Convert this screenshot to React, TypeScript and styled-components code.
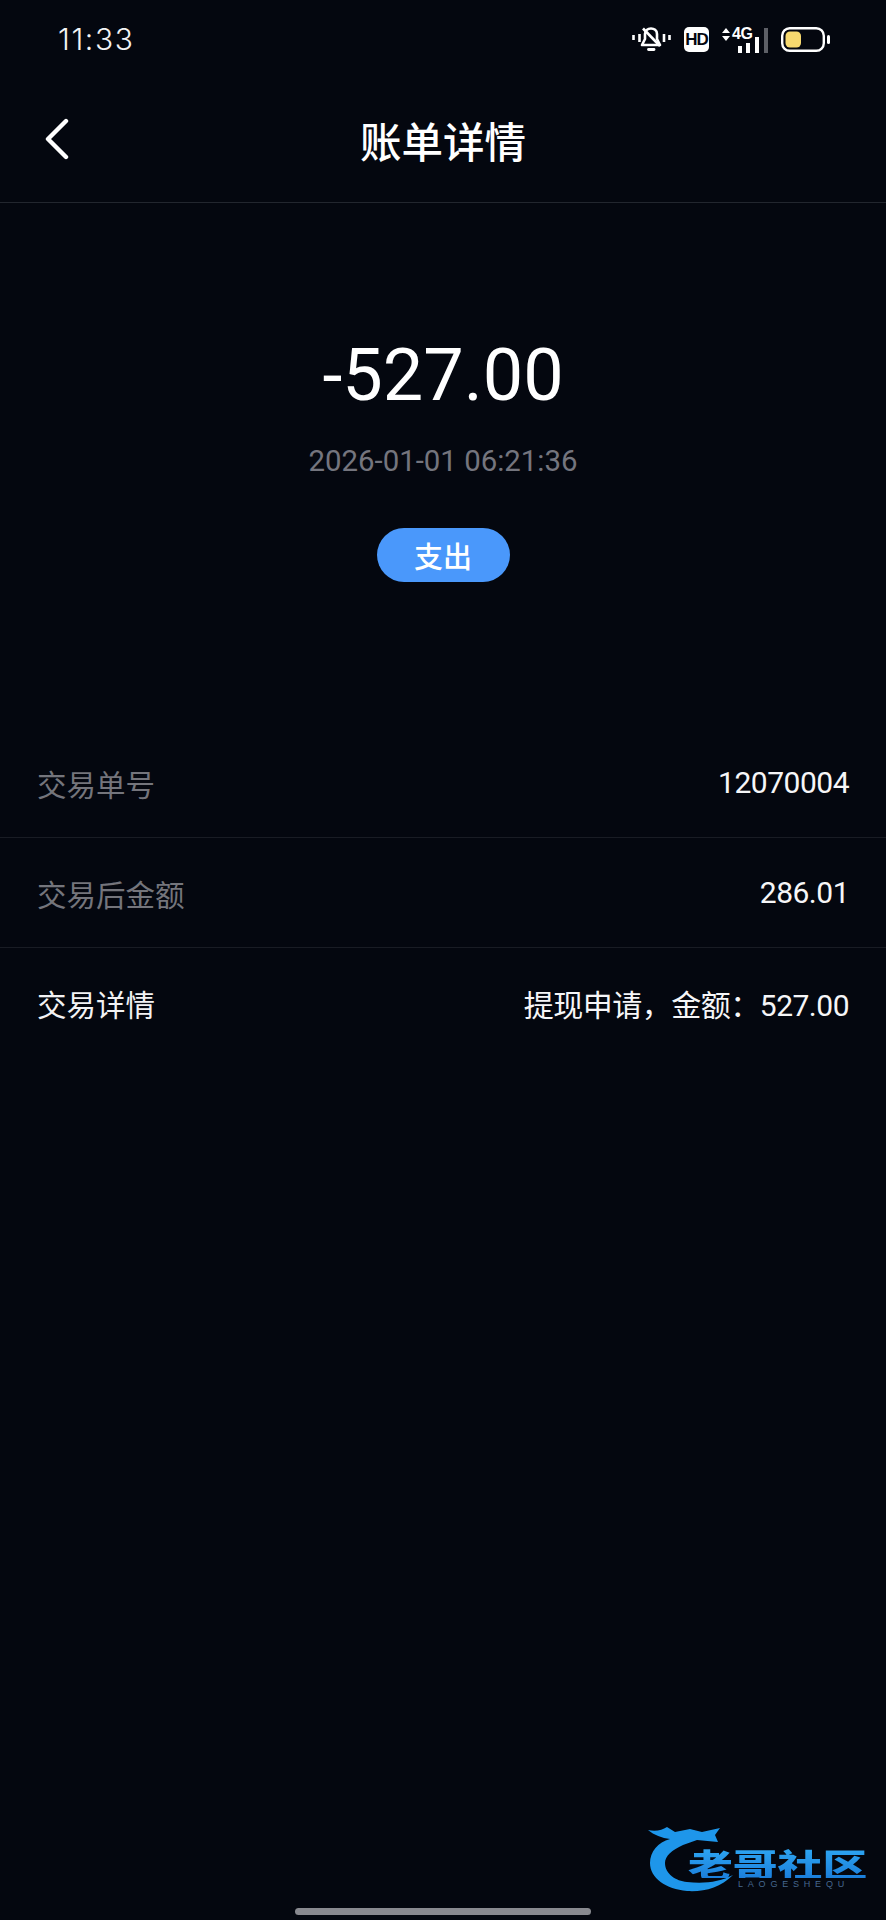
import React from 'react';
import styled, { createGlobalStyle } from 'styled-components';

const rows = [
  { label: '交易单号', value: '12070004', muted: true },
  { label: '交易后金额', value: '286.01', muted: true },
  { label: '交易详情', value: '提现申请，金额：527.00', muted: false }
];

export default function App() {
  return (
    <Page>
      <GlobalStyle />
      <StatusBar>
        <Clock>11:33</Clock>
        <StatusIcons>
          <BellIcon />
          <HdBox>HD</HdBox>
          <SignalIcon />
          <BatteryIcon />
        </StatusIcons>
      </StatusBar>

      <NavBar>
        <BackButton>
          <svg width="26" height="42" viewBox="0 0 26 42" fill="none">
            <path d="M22 3 L4 21 L22 39" stroke="#fff" strokeWidth="4.4" strokeLinecap="round" strokeLinejoin="round" />
          </svg>
        </BackButton>
        <Title>账单详情</Title>
      </NavBar>

      <Hero>
        <Amount>-527.00</Amount>
        <DateText>2026-01-01 06:21:36</DateText>
        <Badge>支出</Badge>
      </Hero>

      <DetailList>
        {rows.map(row => (
          <DetailRow key={row.label}>
            <RowLabel $muted={row.muted}>{row.label}</RowLabel>
            <RowValue>{row.value}</RowValue>
          </DetailRow>
        ))}
      </DetailList>

      <Watermark>
        <svg width="222" height="70" viewBox="0 0 222 70" fill="none">
          <path d="M0 6 C8 8 14 6 19 3 L27 8 L42 5 L54 8 L72 4 L67 11 L70 18 L49 16 L35 21 C24 26 17 32 17 39 C17 50 28 57 39 58 C56 60 72 58 85 51 C72 64 56 68 39 67 C18 65 2 54 2 39 C2 28 10 18 22 15 C14 14 6 11 0 6 Z" fill="#1e96ea" />
        </svg>
        <LogoName>老哥社区</LogoName>
        <LogoLatin>LAOGESHEQU</LogoLatin>
      </Watermark>

      <HomeIndicator />
    </Page>
  );
}

function BellIcon() {
  return (
    <svg width="40" height="28" viewBox="0 0 40 28" fill="none">
      <path d="M1.5 9 V14 M7.5 8 V16 M32 8 V16 M37.5 9 V14" stroke="#fff" strokeWidth="2.6" />
      <path d="M10 19 H28 L25 13 V8 C25 4 22 2.5 19 2.5 C16 2.5 13.5 4 13 8 V13 Z" stroke="#fff" strokeWidth="2.6" strokeLinejoin="round" />
      <path d="M11 2.5 L28 20" stroke="#fff" strokeWidth="2.6" />
      <path d="M16.5 23.5 H22" stroke="#fff" strokeWidth="2.8" strokeLinecap="round" />
    </svg>
  );
}

function SignalIcon() {
  return (
    <SignalWrap>
      <ArrowsIcon width="8" height="13" viewBox="0 0 8 13">
        <path d="M4 0 L8 5 H0 Z M4 13 L0 8 H8 Z" fill="#fff" />
      </ArrowsIcon>
      <NetworkLabel>4G</NetworkLabel>
      <svg width="31" height="25" viewBox="0 0 31 25">
        <rect x="0" y="18" width="4" height="7" fill="#fff" />
        <rect x="8" y="15" width="4" height="10" fill="#fff" />
        <rect x="17" y="9" width="4" height="16" fill="#fff" />
        <rect x="26" y="0" width="4" height="25" fill="#5d5f66" />
      </svg>
    </SignalWrap>
  );
}

function BatteryIcon() {
  return (
    <svg width="49" height="25" viewBox="0 0 49 25" fill="none">
      <rect x="1.2" y="1.2" width="41.6" height="22.6" rx="7.5" stroke="#fff" strokeWidth="2.4" />
      <rect x="4.5" y="4.5" width="15.5" height="16" rx="4.5" fill="#f7d96f" />
      <rect x="46" y="8" width="3" height="9" rx="1.5" fill="#fff" />
    </svg>
  );
}

const GlobalStyle = createGlobalStyle`
  html, body {
    margin: 0;
    padding: 0;
    background: #04070f;
  }
`;

const fontStack = `Roboto, "Noto Sans CJK SC", sans-serif`;

const Page = styled.div`
  position: relative;
  width: 886px;
  height: 1920px;
  overflow: hidden;
  background: #04070f;
  color: #fff;
  font-family: ${fontStack};
`;

const StatusBar = styled.div`
  height: 78px;
  padding: 0 56px 0 58px;
  display: flex;
  align-items: center;
  justify-content: space-between;
`;

const Clock = styled.div`
  font-family: Inter, Roboto, sans-serif;
  font-size: 30px;
  font-weight: 300;
  letter-spacing: 1.6px;
  color: #f4f4f6;
`;

const StatusIcons = styled.div`
  display: flex;
  align-items: center;
  gap: 12px;
  margin-top: 1px;
`;

const HdBox = styled.div`
  width: 25px;
  height: 25px;
  border-radius: 5px;
  background: #fff;
  color: #04070f;
  font-family: "Liberation Sans", sans-serif;
  font-size: 17px;
  font-weight: 700;
  letter-spacing: -1px;
  display: flex;
  align-items: center;
  justify-content: center;
`;

const SignalWrap = styled.div`
  position: relative;
  width: 48px;
  height: 26px;
  display: flex;
  align-items: flex-end;
  justify-content: flex-end;
`;

const ArrowsIcon = styled.svg`
  position: absolute;
  left: 1px;
  top: 1px;
`;

const NetworkLabel = styled.span`
  position: absolute;
  left: 11px;
  top: -1px;
  font-family: "Liberation Sans", sans-serif;
  font-size: 16px;
  font-weight: 700;
  line-height: 16px;
  letter-spacing: -0.5px;
`;

const NavBar = styled.header`
  position: relative;
  height: 124px;
  display: flex;
  align-items: center;
  justify-content: center;
  border-bottom: 1px solid #22262e;
`;

const BackButton = styled.div`
  position: absolute;
  left: 44px;
  top: 40px;
  line-height: 0;
`;

const Title = styled.h1`
  margin: 0;
  font-size: 41.5px;
  font-weight: 500;
  color: #fff;
`;

const Hero = styled.section`
  display: flex;
  flex-direction: column;
  align-items: center;
  padding-top: 125px;
`;

const Amount = styled.div`
  font-size: 72px;
  line-height: 96px;
  color: #fff;
`;

const DateText = styled.div`
  margin-top: 17px;
  font-size: 29.4px;
  line-height: 40px;
  color: #74757e;
`;

const Badge = styled.div`
  margin-top: 47px;
  width: 133px;
  height: 54px;
  border-radius: 27px;
  background: #4a98fb;
  color: #fff;
  font-size: 29px;
  font-weight: 500;
  display: flex;
  align-items: center;
  justify-content: center;
`;

const DetailList = styled.section`
  margin-top: 146px;
`;

const DetailRow = styled.div`
  height: 109px;
  padding: 0 37px;
  display: flex;
  align-items: center;
  justify-content: space-between;

  & + & {
    border-top: 1px solid #191c24;
  }
`;

const RowLabel = styled.span<{ $muted: boolean }>`
  font-size: 29.5px;
  color: ${p => (p.$muted ? '#74757c' : '#f2f2f4')};
`;

const RowValue = styled.span`
  font-size: 30px;
  letter-spacing: -0.5px;
  color: #f6f6f8;
`;

const Watermark = styled.div`
  position: absolute;
  left: 648px;
  top: 1824px;
  width: 222px;
  height: 70px;
`;

const LogoName = styled.div`
  position: absolute;
  left: 40px;
  top: 24px;
  font-family: "Noto Sans CJK SC", sans-serif;
  font-size: 32px;
  font-weight: 900;
  line-height: 30px;
  white-space: nowrap;
  transform: scaleX(1.4);
  transform-origin: left center;
  background: linear-gradient(#2ea6f2, #1b7fdc);
  background-clip: text;
  -webkit-background-clip: text;
  color: transparent;
`;

const LogoLatin = styled.div`
  position: absolute;
  left: 90px;
  top: 55px;
  font-family: "Liberation Sans", sans-serif;
  font-size: 9px;
  line-height: 10px;
  letter-spacing: 4.8px;
  white-space: nowrap;
  color: #46688f;
`;

const HomeIndicator = styled.div`
  position: absolute;
  left: 295px;
  top: 1908px;
  width: 296px;
  height: 7px;
  border-radius: 4px;
  background: #88898f;
`;
